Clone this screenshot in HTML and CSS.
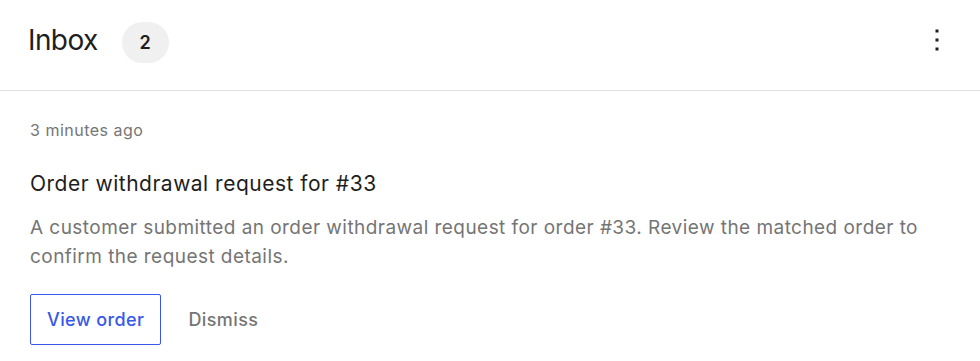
FILE: index.html
```html
<!DOCTYPE html>
<html lang="en">

<head>
  <meta charset="UTF-8">
  <title>Inbox</title>
  <link rel="stylesheet" href="styles.css">
</head>

<body>
  <div class="inbox">
    <div class="inbox-header">
      <h2 class="inbox-title">Inbox</h2>
      <span class="inbox-count">2</span>
      <button class="inbox-menu" aria-label="Inbox options">
        <svg viewBox="0 0 24 24" width="36" height="36">
          <path d="M13 19h-2v-2h2v2zm0-6h-2v-2h2v2zm0-6h-2V5h2v2z"></path>
        </svg>
      </button>
    </div>

    <div class="note">
      <div class="note-date">3 minutes ago</div>
      <h3 class="note-title">Order withdrawal request for #33</h3>
      <p class="note-content">
        A customer submitted an order withdrawal request for order #33. Review the matched order to
        confirm the request details.
      </p>
      <div class="note-actions">
        <button class="btn btn-secondary">View order</button>
        <button class="btn btn-link">Dismiss</button>
      </div>
    </div>
  </div>
</body>

</html>
```

FILE: styles.css
```css
body {
  margin: 0;
  background: #fff;
  font-family: Inter, "Noto Sans", sans-serif;
  color: #1e1e1e;
}

.inbox-header {
  display: flex;
  align-items: center;
  box-sizing: border-box;
  height: 91px;
  padding: 0 25px 6px 28px;
  border-bottom: 1px solid #e0e0e0;
}

.inbox-title {
  margin: 0 0 5px;
  font-size: 28px;
  font-weight: 400;
  letter-spacing: -0.6px;
  color: #1e1e1e;
}

.inbox-count {
  display: flex;
  align-items: center;
  justify-content: center;
  margin-left: 24px;
  width: 47px;
  height: 41px;
  border-radius: 21px;
  background: #f0f0f0;
  font-size: 18px;
  font-weight: 600;
}

.inbox-menu {
  margin: 0 0 4px auto;
  padding: 0;
  border: 0;
  background: none;
  line-height: 0;
  cursor: pointer;
}

.inbox-menu svg {
  fill: #1e1e1e;
}

.note {
  padding: 29px 30px 0;
}

.note-date {
  font-size: 16px;
  line-height: 20px;
  letter-spacing: 0.5px;
  color: #757575;
}

.note-title {
  margin: 30px 0 0;
  font-size: 21px;
  font-weight: 400;
  line-height: 28px;
  letter-spacing: 0.5px;
}

.note-content {
  margin: 15px 0 0;
  font-size: 19px;
  line-height: 29px;
  letter-spacing: 0.45px;
  color: #757575;
}

.note-actions {
  display: flex;
  align-items: center;
  margin-top: 23px;
}

.btn {
  font-family: inherit;
  font-size: 18px;
  font-weight: 500;
  letter-spacing: 0.4px;
  background: none;
  cursor: pointer;
}

.btn-secondary {
  height: 51px;
  padding: 0 16px;
  border: 1px solid #3858e9;
  border-radius: 2px;
  color: #3858e9;
}

.btn-link {
  margin-left: 27px;
  padding: 0;
  border: 0;
  color: #757575;
}
```
